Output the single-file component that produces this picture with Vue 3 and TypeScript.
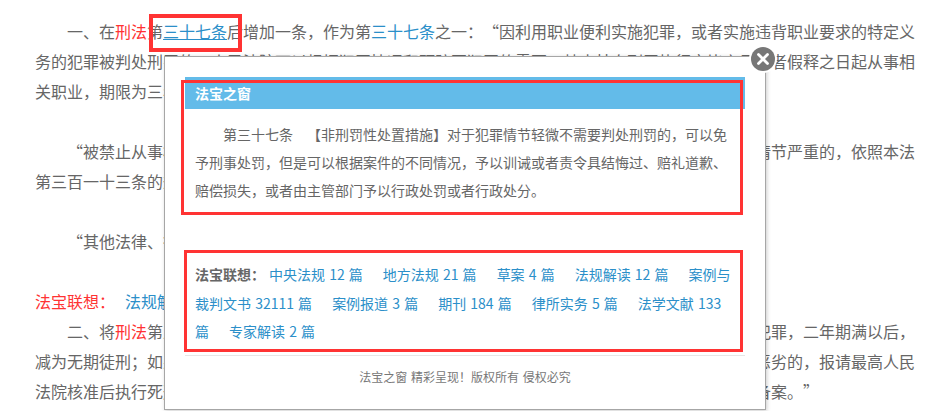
<script setup lang="ts">
interface Link { name: string; count: string }
const links: Link[] = [
  { name: '中央法规', count: '12' },
  { name: '地方法规', count: '21' },
  { name: '草案', count: '4' },
  { name: '法规解读', count: '12' },
  { name: '案例与裁判文书', count: '32111' },
  { name: '案例报道', count: '3' },
  { name: '期刊', count: '184' },
  { name: '律所实务', count: '5' },
  { name: '法学文献', count: '133' },
  { name: '专家解读', count: '2' },
]
</script>

<template>
  <div class="page" lang="zh-CN">
    <article class="article">
      <p class="para">一、在<span class="red">刑法</span>第<a class="link underlined">三十七条</a>后增加一条，作为第<a class="link">三十七条</a>之一：“因利用职业便利实施犯罪，或者实施违背职业要求的特定义务的犯罪被判处刑罚的，人民法院可以根据犯罪情况和预防再犯罪的需要，禁止其自刑罚执行完毕之日或者假释之日起从事相关职业，期限为三年至五年。</p>
      <p class="para">“被禁止从事相关职业的人违反人民法院依照前款规定作出的决定的，由公安机关依法给予处罚；情节严重的，依照本法第三百一十三条的规定定罪处罚。</p>
      <p class="para">“其他法律、行政法规对其从事相关职业另有禁止或者限制性规定的，从其规定。”</p>
      <div class="assoc"><span class="red">法宝联想：</span><a class="link assoc-link">法规解读 1 篇</a></div>
      <p class="para last">二、将<span class="red">刑法</span>第五十条第一款修改为：“判处死刑缓期执行的，在死刑缓期执行期间，如果没有故意犯罪，二年期满以后，减为无期徒刑；如果确有重大立功表现，二年期满以后，减为二十五年有期徒刑；如果故意犯罪，情节恶劣的，报请最高人民法院核准后执行死刑；对于故意犯罪未执行死刑的，死刑缓期执行的期间重新计算，并报最高人民法院备案。”</p>
    </article>

    <section class="modal">
      <h3 class="modal-title">法宝之窗</h3>
      <p class="modal-text">第三十七条　【非刑罚性处置措施】对于犯罪情节轻微不需要判处刑罚的，可以免予刑事处罚，但是可以根据案件的不同情况，予以训诫或者责令具结悔过、赔礼道歉、赔偿损失，或者由主管部门予以行政处罚或者行政处分。</p>
      <div class="modal-links">
        <b class="links-label">法宝联想：</b>
        <a v-for="l in links" :key="l.name" class="modal-link">{{ l.name }} {{ l.count }} 篇</a>
      </div>
      <footer class="modal-foot">法宝之窗 精彩呈现！版权所有 侵权必究</footer>
    </section>

    <button class="close" aria-label="关闭">
      <svg width="24" height="24" viewBox="0 0 24 24">
        <circle cx="12" cy="12" r="12" fill="#777" />
        <path d="M7.5 7.5 16.5 16.5M16.5 7.5 7.5 16.5" stroke="#fff" stroke-width="2.8" stroke-linecap="round" />
      </svg>
    </button>

    <div class="mark mark-link"></div>
    <div class="mark mark-body"></div>
    <div class="mark mark-links"></div>
  </div>
</template>

<style>
html, body { margin: 0; background: #fff; overflow: hidden; }
</style>

<style scoped>
.page {
  position: relative;
  width: 934px;
  height: 411px;
  overflow: hidden;
  background: #fff;
  font-family: "Noto Sans CJK SC", "Noto Sans", sans-serif;
  color: #666;
  text-spacing-trim: space-all;
  text-autospace: no-autospace;
}
.article {
  width: 886px;
  padding: 16px 0 0 35px;
  font-size: 16px;
  line-height: 30px;
}
.para {
  margin: 0 0 30px;
  text-indent: 32px;
}
.para.last { margin: 0; }
.assoc { white-space: nowrap; }
.assoc-link { margin-left: 10px; }
.red { color: #ff3333; }
.link { color: #2b8fc9; }
.underlined { text-decoration: underline; }

.modal {
  position: absolute;
  left: 164px;
  top: 56px;
  width: 560px;
  height: 312px;
  padding: 20px;
  background: #fff;
  border: 1px solid #a6a6a6;
  box-shadow: 1px 1px 4px rgba(0, 0, 0, 0.2);
}
.modal-title {
  margin: 0;
  height: 32px;
  padding-left: 10px;
  background: #63bbe9;
  color: #fff;
  font-size: 14px;
  font-weight: 700;
  line-height: 32px;
}
.modal-text {
  margin: 0;
  padding: 11px 10px 0;
  font-size: 14px;
  line-height: 28px;
  text-indent: 28px;
  color: #666;
}
.modal-links {
  margin-top: 56px;
  padding: 0 10px 9px;
  border-bottom: 1px solid #e6e6e6;
  font-size: 14px;
  line-height: 28.5px;
  word-spacing: 1px;
}
.links-label { color: #666; font-weight: 700; margin-right: 4px; }
.modal-link { color: #2b8fc9; margin-right: 20px; }
.modal-foot {
  margin-top: 12px;
  text-align: center;
  font-size: 12px;
  line-height: 18px;
  word-spacing: 1px;
  color: #777;
}

.close {
  position: absolute;
  left: 749px;
  top: 45px;
  width: 28px;
  height: 28px;
  padding: 2px;
  border: 0;
  border-radius: 50%;
  background: #fff;
}
.close svg { display: block; }

.mark {
  position: absolute;
  box-sizing: border-box;
  border: 3px solid #ff3333;
}
.mark-link { left: 149px; top: 14px; width: 93px; height: 38px; border-width: 4px; }
.mark-body { left: 181px; top: 80px; width: 562px; height: 135px; }
.mark-links { left: 184px; top: 250px; width: 559px; height: 102px; }
</style>
